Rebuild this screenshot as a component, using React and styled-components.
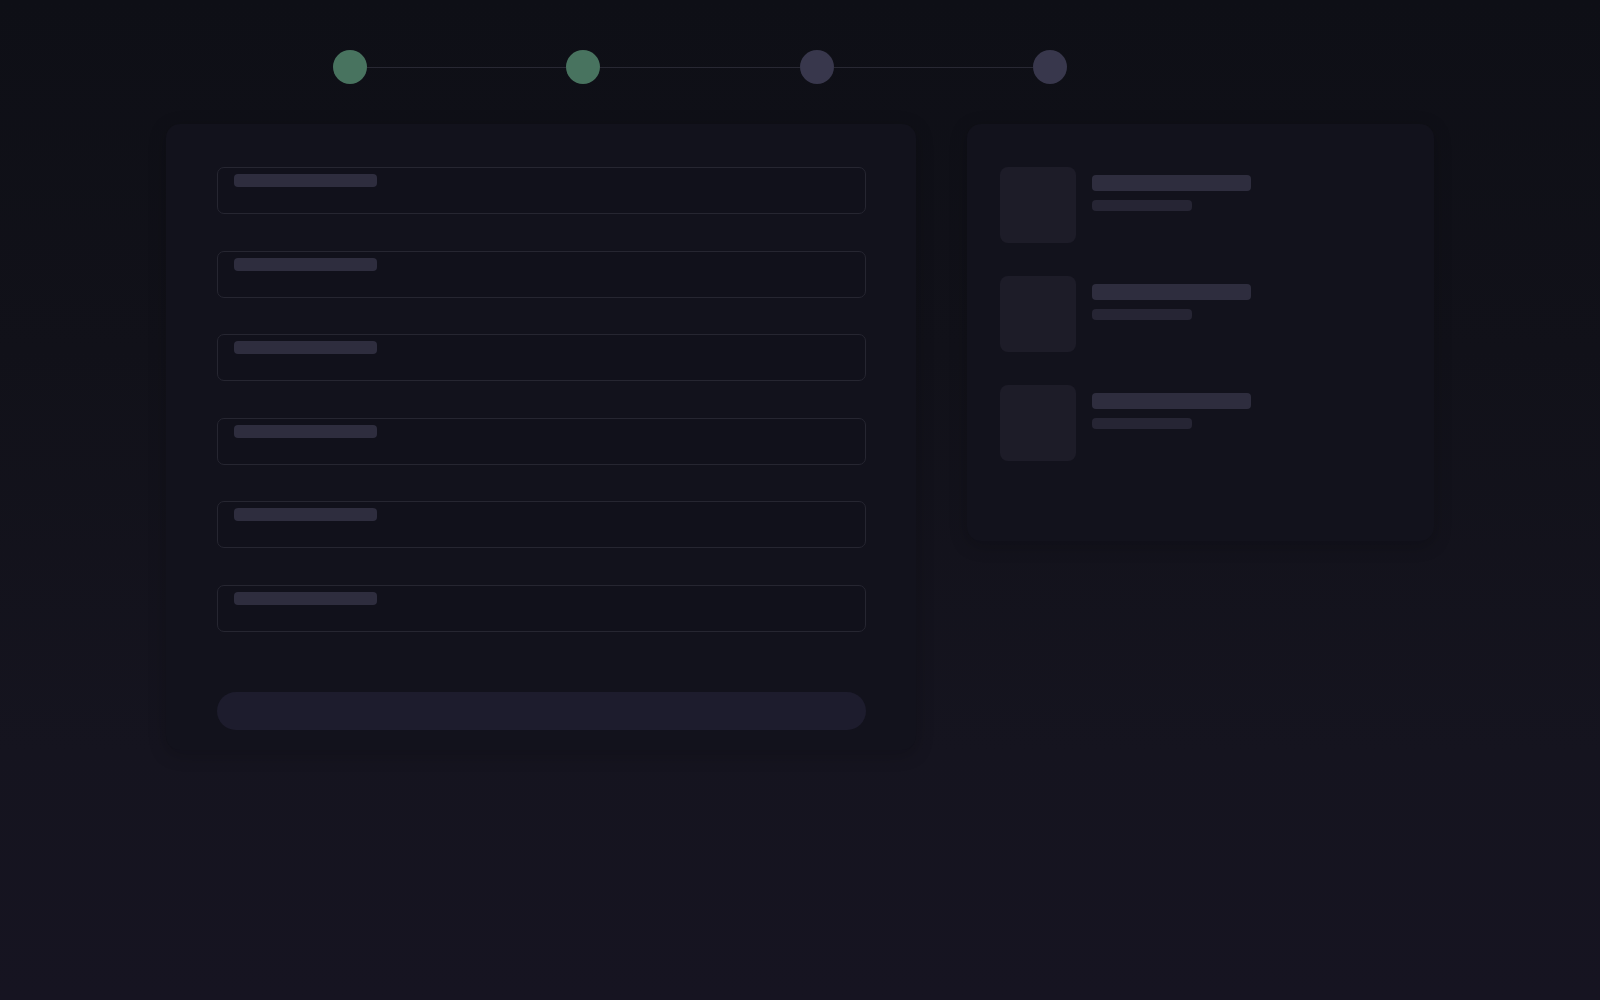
import React from 'react'
import styled, { createGlobalStyle } from 'styled-components'

const GlobalStyle = createGlobalStyle`
  html, body {
    margin: 0;
    padding: 0;
  }
  body {
    min-height: 1000px;
    background: linear-gradient(180deg, #0e0f16 0%, #111119 35%, #15141f 75%, #161421 100%);
    font-family: Inter, "Noto Sans", sans-serif;
  }
`

const Page = styled.div`
  width: 1268px;
  margin: 0 auto;
  padding-top: 50px;
`

const Stepper = styled.div`
  display: flex;
  align-items: center;
  width: 734px;
  margin-left: 167px;
`

const Dot = styled.span`
  flex: none;
  width: 34px;
  height: 34px;
  border-radius: 50%;
  background: ${p => (p.done ? '#48735f' : '#38374c')};
`

const Line = styled.span`
  flex: 1;
  height: 1px;
  background: #282833;
`

const Columns = styled.div`
  display: flex;
  gap: 51px;
  align-items: flex-start;
  margin-top: 40px;
`

const Card = styled.section`
  background: #12121c;
  border-radius: 14px;
  box-shadow: 0 4px 18px rgba(6, 6, 10, 0.22);
`

const FormCard = styled(Card)`
  width: 751px;
  box-sizing: border-box;
  padding: 43px 50px 20px 51px;
`

const Fields = styled.div`
  display: flex;
  flex-direction: column;
  gap: 36.5px;
`

const Field = styled.div`
  height: 47px;
  box-sizing: border-box;
  padding: 6px 16px 0;
  border: 1px solid #262631;
  border-radius: 7px;
  background: #11111b;
`

const Bar = styled.div`
  width: ${p => p.w}px;
  height: ${p => p.h}px;
  border-radius: 4px;
  background: ${p => p.tone || '#2e2d3e'};
`

const SubmitButton = styled.div`
  height: 38px;
  margin-top: 60px;
  border-radius: 19px;
  background: #1d1c2d;
`

const SideCard = styled(Card)`
  width: 467px;
  min-height: 417px;
  box-sizing: border-box;
  padding: 43px 33px;
  display: flex;
  flex-direction: column;
  gap: 33px;
`

const Item = styled.div`
  display: flex;
  gap: 16px;
`

const Thumb = styled.div`
  width: 76px;
  height: 76px;
  border-radius: 8px;
  background: #1d1c28;
`

const ItemText = styled.div`
  display: flex;
  flex-direction: column;
  gap: 9px;
  padding-top: 8px;
`

const steps = [true, true, false, false]

export default function App() {
  return (
    <>
      <GlobalStyle />
      <Page>
        <Stepper>
          {steps.map((done, i) => (
            <React.Fragment key={i}>
              {i > 0 && <Line />}
              <Dot done={done} />
            </React.Fragment>
          ))}
        </Stepper>
        <Columns>
          <FormCard>
            <Fields>
              {[0, 1, 2, 3, 4, 5].map(i => (
                <Field key={i}>
                  <Bar w={143} h={13} />
                </Field>
              ))}
            </Fields>
            <SubmitButton />
          </FormCard>
          <SideCard>
            {[0, 1, 2].map(i => (
              <Item key={i}>
                <Thumb />
                <ItemText>
                  <Bar w={159} h={16} />
                  <Bar w={100} h={11} tone="#262534" />
                </ItemText>
              </Item>
            ))}
          </SideCard>
        </Columns>
      </Page>
    </>
  )
}
